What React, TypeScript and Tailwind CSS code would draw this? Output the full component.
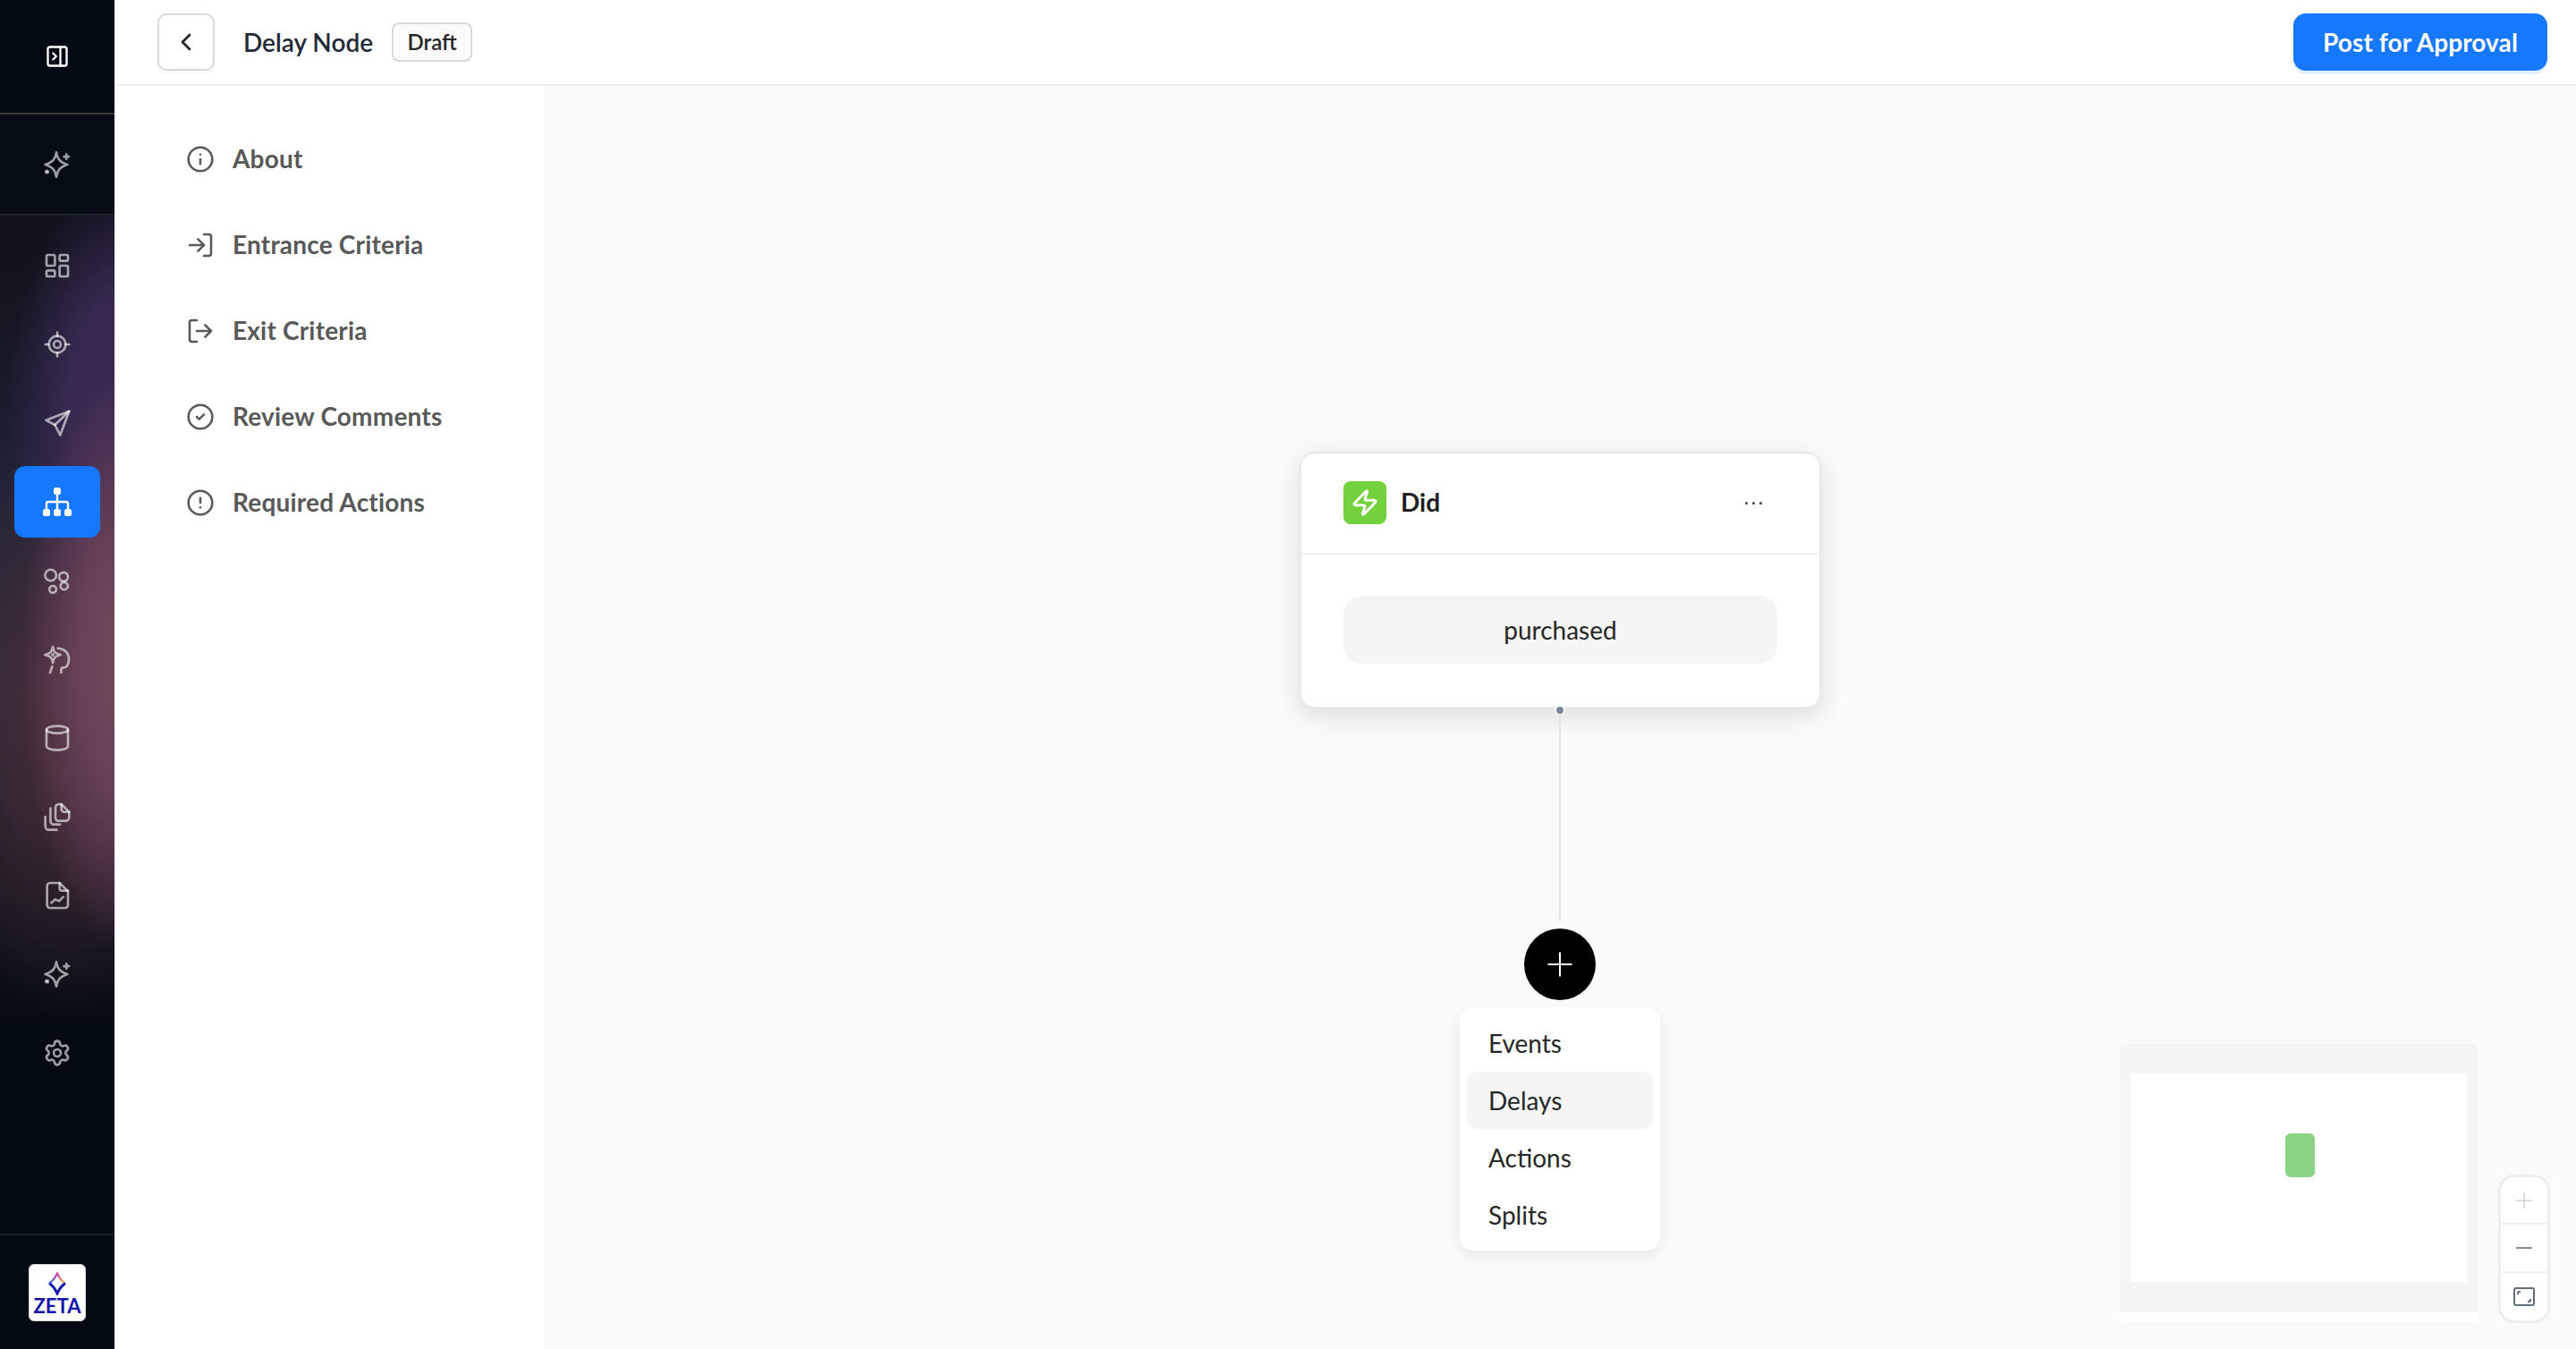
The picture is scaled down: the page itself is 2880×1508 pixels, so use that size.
import React from "react";
import { ChevronLeft, CircleAlert, CircleCheck, Cylinder, Info, LayoutDashboard, LocateFixed, LogIn, LogOut, Minus, PanelRightClose, Plus, Settings, Zap } from "lucide-react";

const Svg = ({ children }: { children: React.ReactNode }) => (
  <svg width="32" height="32" viewBox="0 0 24 24" fill="none" stroke="currentColor" strokeWidth="2" strokeLinecap="round" strokeLinejoin="round">
    {children}
  </svg>
);

const Sparkle = () => (
  <Svg>
    <path d="M11.25 1.800c.9 5.400 2.800 8.200 9.300 10.200-6.500 2.100-8.400 4.900-9.300 10.300-.9-5.400-2.800-8.200-9.300-10.300 6.500-2 8.400-4.800 9.300-10.200z" />
    <path d="M19.700 3.200v4.200M17.600 5.300h4.200" />
    <circle cx="3.400" cy="18" r="0.9" fill="currentColor" />
  </Svg>
);
const SendIcon = () => (
  <Svg>
    <path d="M22 2 2.500 9.500l7.500 4L14.500 22z" />
    <path d="M22 2 10 13.500" />
  </Svg>
);
const Hierarchy = () => (
  <svg width="32" height="32" viewBox="0 0 32 32" fill="white">
    <rect x="12" y="0" width="8" height="8" rx="2.500" />
    <rect x="0" y="24" width="8" height="8" rx="2.500" />
    <rect x="12" y="24" width="8" height="8" rx="2.500" />
    <rect x="24" y="24" width="8" height="8" rx="2.500" />
    <path d="M16 8v16M4 24v-6a2 2 0 0 1 2-2h20a2 2 0 0 1 2 2v6" fill="none" stroke="white" strokeWidth="2.400" />
  </svg>
);
const Bubbles = () => (
  <Svg>
    <circle cx="6.500" cy="7.500" r="4.700" />
    <circle cx="17.300" cy="8.800" r="3.700" />
    <circle cx="8.300" cy="19.300" r="2.900" />
    <circle cx="17.800" cy="16.500" r="3.100" />
  </Svg>
);
const Journey = () => (
  <Svg>
    <path d="M8.250 1.500c.7 4.500 1.800 5.600 6.500 6.750-4.700 1.150-5.800 2.250-6.500 6.750-.7-4.500-1.800-5.600-6.500-6.750 4.700-1.150 5.800-2.250 6.500-6.750z" />
    <path d="M12.500 2.800c5.200 0 9.200 3.700 9.200 8.700 0 4.300-1.500 7.500-4.200 7.500h-1a1.500 1.500 0 0 0-1.200 1.500v2.700" />
    <path d="M7.750 18 6 23.300" />
    <circle cx="8.250" cy="8.250" r="0.500" fill="currentColor" />
  </Svg>
);
const Files = () => (
  <Svg>
    <path d="M13 1.500h2.500l6.500 6.500v4.500a3 3 0 0 1-3 3h-6a2.500 2.500 0 0 1-2.500-2.500V4.500a3 3 0 0 1 2.500-3z" />
    <path d="M15.500 1.500v4a2.500 2.500 0 0 0 2.500 2.500h4" />
    <path d="M6.300 5v10.500a3 3 0 0 0 3 3h5" />
    <path d="M2 12v8a3 3 0 0 0 3 3h6.500" />
  </Svg>
);
const ReportFile = () => (
  <Svg>
    <path d="M6 1.500h8l7 7V20a2.500 2.500 0 0 1-2.500 2.500H6A2.500 2.500 0 0 1 3.500 20V4A2.500 2.500 0 0 1 6 1.500z" />
    <path d="M14 1.500V6a2 2 0 0 0 2 2h5" />
    <path d="m7 18.250 3.500-3 3 1.500 3.500-3.500" />
  </Svg>
);
const FitIcon = () => (
  <svg width="24" height="21" viewBox="0 0 24 21" fill="none" stroke="#5f6f76" strokeWidth="2">
    <rect x="1" y="1" width="22" height="19" rx="2" />
    <path d="M5 8V6.500A1.500 1.500 0 0 1 6.500 5H8M19 13v1.500a1.500 1.500 0 0 1-1.500 1.500H16" />
  </svg>
);
const ZetaMark = () => (
  <svg width="22" height="26" viewBox="0 0 22 26" fill="none" strokeLinejoin="miter" className="block shrink-0">
    <defs>
      <linearGradient id="zetaMarkA" x1="0" y1="0.5" x2="1" y2="0.5">
        <stop offset="0" stopColor="#2f8cf0" />
        <stop offset="0.5" stopColor="#d946a8" />
        <stop offset="1" stopColor="#fcd34d" />
      </linearGradient>
    </defs>
    <path d="M2 12.500Q7.500 9 11 1.500 14.500 9 20 12.500" stroke="url(#zetaMarkA)" strokeWidth="2.400" />
    <path d="M2 12.500Q7.500 16 11 24 14.500 16 20 12.500" stroke="#1616b4" strokeWidth="3" />
  </svg>
);

const railTop = [
  { icon: <LayoutDashboard size={32} strokeWidth={2} /> },
  { icon: <LocateFixed size={32} strokeWidth={2} /> },
  { icon: <SendIcon /> },
  { icon: <Hierarchy />, active: true },
  { icon: <Bubbles /> },
  { icon: <Journey /> },
  { icon: <Cylinder size={32} strokeWidth={2} /> },
  { icon: <Files /> },
  { icon: <ReportFile /> },
  { icon: <Sparkle /> },
  { icon: <Settings size={32} strokeWidth={2} /> },
];

const navItems = [
  { label: "About", icon: Info },
  { label: "Entrance Criteria", icon: LogIn },
  { label: "Exit Criteria", icon: LogOut },
  { label: "Review Comments", icon: CircleCheck },
  { label: "Required Actions", icon: CircleAlert },
];

export default function App() {
  return (
    <div className="flex h-[1508px] w-[2880px] overflow-hidden bg-white font-['Lato',sans-serif] text-[28px] text-[#262626]">
      <aside className="flex w-[128px] shrink-0 flex-col bg-[radial-gradient(ellipse_115px_320px_at_108%_740px,#734c5e_0%,#664056_45%,transparent_100%),radial-gradient(ellipse_130px_260px_at_108%_460px,#3a2a54_0%,#36284e_50%,transparent_100%),radial-gradient(ellipse_170px_340px_at_60%_800px,#472c3a_0%,transparent_100%),linear-gradient(180deg,#020a14_0%,#14131d_20%,#1e2236_36%,#2c2b38_52%,#17161f_66%,#040a14_76%,#020a14_100%)]">
        <div className="flex h-[128px] items-center justify-center border-b-2 border-[#3a3a3c] bg-[#020a14] text-white">
          <PanelRightClose size={28} strokeWidth={2} />
        </div>
        <div className="flex h-[113px] items-center justify-center border-b-2 border-[#1c222c] bg-[#040c16] text-white/60">
          <Sparkle />
        </div>
        <nav className="flex flex-1 flex-col pt-[12px]">
          {railTop.map((item, i) => (
            <div key={i} className="flex h-[88px] items-center justify-center text-white/60">
              {item.active ? (
                <div className="flex h-[80px] w-[96px] items-center justify-center rounded-xl bg-[#1677ff]">{item.icon}</div>
              ) : (
                item.icon
              )}
            </div>
          ))}
        </nav>
        <div className="flex h-[129px] items-center justify-center border-t-2 border-[#1c222c] bg-[#020a14]">
          <div className="flex h-[64px] w-[64px] flex-col items-center justify-center rounded-[6px] border border-[#d9d9d9] bg-white">
            <ZetaMark />
            <span className="mt-[4px] text-[22px] font-bold leading-[16px] text-[#1414a8]">ZETA</span>
          </div>
        </div>
      </aside>

      <div className="flex min-w-0 flex-1 flex-col">
        <header className="flex h-[96px] shrink-0 items-center justify-between border-b-2 border-[#f0f0f0] bg-white pl-[48px] pr-[32px]">
          <div className="flex items-center">
            <button className="flex h-[64px] w-[64px] items-center justify-center rounded-[10px] border-2 border-[#d9d9d9] bg-white text-[#262626] shadow-[0_4px_0_rgba(0,0,0,0.02)]">
              <ChevronLeft size={32} strokeWidth={2} />
            </button>
            <h1 className="ml-[32px] text-[28px] font-semibold text-[#1f2937]">Delay Node</h1>
            <span className="ml-[21px] flex h-[44px] w-[90px] items-center justify-center rounded-[8px] border-2 border-[#d9d9d9] bg-[#fafafa] text-[24px] font-semibold text-[#262626]">Draft</span>
          </div>
          <button className="h-[64px] w-[284px] rounded-[14px] bg-[#1677ff] text-[28px] font-bold tracking-[0.1px] text-white shadow-[0_4px_0_#e6f1ff]">Post for Approval</button>
        </header>

        <div className="flex min-h-0 flex-1">
          <nav className="flex w-[480px] shrink-0 flex-col bg-white pl-[80px] pt-[33px]">
            {navItems.map(({ label, icon: Icon }) => (
              <div key={label} className="flex h-[96px] items-center gap-[20px] text-[#595959]">
                <Icon size={32} strokeWidth={1.9} className="translate-y-[1px]" />
                <span className="text-[28px] font-bold tracking-[0.2px]">{label}</span>
              </div>
            ))}
          </nav>

          <main className="relative flex-1 bg-[#fafafa]">
            <section className="absolute left-[845px] top-[409px] h-[287px] w-[583px] rounded-[16px] border-2 border-[#e9e9e9] bg-white shadow-[0_8px_28px_rgba(0,0,0,0.12)]">
              <div className="flex h-[113px] items-center justify-between border-b-2 border-[#f0f0f0] pb-[1px] pl-[47px] pr-[64px]">
                <div className="flex items-center gap-[16px]">
                  <span className="flex h-[48px] w-[48px] items-center justify-center rounded-[8px] bg-[#73d13d] text-white">
                    <Zap size={32} strokeWidth={2.2} />
                  </span>
                  <span className="-translate-y-[1px] text-[28px] font-bold text-[#1f1f1f]">Did</span>
                </div>
                <span className="flex gap-[5px]">
                  <i className="h-[3px] w-[3px] rounded-full bg-[#434343]" />
                  <i className="h-[3px] w-[3px] rounded-full bg-[#434343]" />
                  <i className="h-[3px] w-[3px] rounded-full bg-[#434343]" />
                </span>
              </div>
              <div className="px-[47px] pt-[46px]">
                <div className="flex h-[76px] items-center justify-center rounded-[20px] bg-[#f5f5f5] text-[28px]">purchased</div>
              </div>
            </section>

            <span className="absolute left-[1130px] top-[692px] h-[12px] w-[12px] rounded-full border-2 border-white bg-[#7a869a]" />
            <span className="absolute left-[1135px] top-[702px] h-[232px] w-[2px] bg-[#e4e4e4]" />

            <button className="absolute left-[1096px] top-[942px] flex h-[80px] w-[80px] items-center justify-center rounded-full bg-black text-white">
              <Plus size={44} strokeWidth={1.1} />
            </button>

            <div className="absolute left-[1024px] top-[1030px] flex w-[224px] flex-col rounded-[16px] bg-white p-[8px] shadow-[0_6px_16px_rgba(0,0,0,0.08)]">
              {["Events", "Delays", "Actions", "Splits"].map((item) => (
                <div key={item} className={`flex h-[64px] items-center rounded-[12px] pl-[24px] text-[28px] ${item === "Delays" ? "bg-[#f5f5f5]" : ""}`}>{item}</div>
              ))}
            </div>

            <div className="absolute left-[1762px] top-[1071px] h-[311px] w-[400px] bg-white">
              <div className="h-[300px] bg-[#f5f5f5] pl-[12px] pr-[12px] pt-[33px]">
                <div className="relative h-[233px] w-[376px] bg-white">
                  <span className="absolute left-[173px] top-[67px] h-[49px] w-[33px] rounded-[6px] bg-[#8bd483]" />
                </div>
              </div>
            </div>

            <div className="absolute left-[2185px] top-[1217px] flex h-[166px] w-[58px] flex-col overflow-hidden rounded-[18px] border-[3px] border-[#eeeeee] bg-white">
              <div className="flex h-[53px] shrink-0 items-center justify-center border-b-2 border-[#f0f0f0] text-[#d0d0d0]"><Plus size={28} strokeWidth={1.3} /></div>
              <div className="flex h-[54px] shrink-0 items-center justify-center border-b-2 border-[#f0f0f0] text-[#8c8c8c]"><Minus size={28} strokeWidth={1.7} /></div>
              <div className="flex flex-1 items-center justify-center"><FitIcon /></div>
            </div>
          </main>
        </div>
      </div>
    </div>
  );
}
